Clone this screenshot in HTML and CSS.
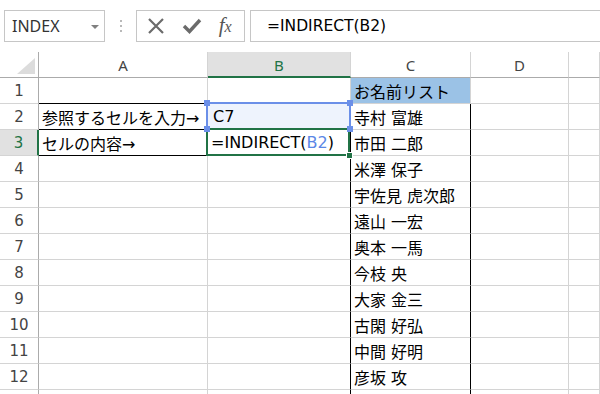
FILE: index.html
```html
<!DOCTYPE html>
<html lang="ja">
<head>
  <meta charset="UTF-8">
  <title>INDIRECT</title>
  <link rel="stylesheet" href="styles.css">
</head>
<body>

  <!-- Formula bar -->
  <div class="toolbar">
    <div class="namebox">
      <span>INDEX</span>
      <span class="caret"></span>
    </div>
    <div class="grip"><i></i><i></i><i></i></div>
    <div class="fbuttons">
      <svg width="18" height="18" viewBox="0 0 18 18"><path d="M2 2 L16 16 M16 2 L2 16" stroke="#6b6b6b" stroke-width="2.2" fill="none"/></svg>
      <svg width="20" height="18" viewBox="0 0 20 18"><path d="M2 9 L7.5 14.5 L18 3" stroke="#6b6b6b" stroke-width="3.4" fill="none"/></svg>
      <span class="fx">f<small>x</small></span>
    </div>
    <div class="formula">=INDIRECT(B2)</div>
  </div>

  <!-- Sheet -->
  <div class="sheet">
    <div class="hd corner"><span class="tri"></span></div>
    <div class="hd">A</div>
    <div class="hd sel">B</div>
    <div class="hd">C</div>
    <div class="hd">D</div>
    <div class="hd"></div>

    <div class="rh">1</div>
    <div class="c bk-b"></div>
    <div class="c"></div>
    <div class="c title">お名前リスト</div>
    <div class="c"></div>
    <div class="c"></div>

    <div class="rh">2</div>
    <div class="c bk-b bk-r">参照するセルを入力→</div>
    <div class="c ref">C7</div>
    <div class="c bk-r">寺村 富雄</div>
    <div class="c"></div>
    <div class="c"></div>

    <div class="rh sel">3</div>
    <div class="c bk-b bk-r">セルの内容→</div>
    <div class="c bk-r">=INDIRECT(<span class="blue">B2</span>)</div>
    <div class="c bk-r">市田 二郎</div>
    <div class="c"></div>
    <div class="c"></div>

    <div class="rh">4</div>
    <div class="c"></div>
    <div class="c bk-r"></div>
    <div class="c bk-r">米澤 保子</div>
    <div class="c"></div>
    <div class="c"></div>

    <div class="rh">5</div>
    <div class="c"></div>
    <div class="c bk-r"></div>
    <div class="c bk-r">宇佐見 虎次郎</div>
    <div class="c"></div>
    <div class="c"></div>

    <div class="rh">6</div>
    <div class="c"></div>
    <div class="c bk-r"></div>
    <div class="c bk-r">遠山 一宏</div>
    <div class="c"></div>
    <div class="c"></div>

    <div class="rh">7</div>
    <div class="c"></div>
    <div class="c bk-r"></div>
    <div class="c bk-r">奥本 一馬</div>
    <div class="c"></div>
    <div class="c"></div>

    <div class="rh">8</div>
    <div class="c"></div>
    <div class="c bk-r"></div>
    <div class="c bk-r">今枝 央</div>
    <div class="c"></div>
    <div class="c"></div>

    <div class="rh">9</div>
    <div class="c"></div>
    <div class="c bk-r"></div>
    <div class="c bk-r">大家 金三</div>
    <div class="c"></div>
    <div class="c"></div>

    <div class="rh">10</div>
    <div class="c"></div>
    <div class="c bk-r"></div>
    <div class="c bk-r">古閑 好弘</div>
    <div class="c"></div>
    <div class="c"></div>

    <div class="rh">11</div>
    <div class="c"></div>
    <div class="c bk-r"></div>
    <div class="c bk-r">中間 好明</div>
    <div class="c"></div>
    <div class="c"></div>

    <div class="rh">12</div>
    <div class="c"></div>
    <div class="c bk-r"></div>
    <div class="c bk-r">彦坂 攻</div>
    <div class="c"></div>
    <div class="c"></div>

    <div class="rh"></div>
    <div class="c"></div>
    <div class="c bk-r"></div>
    <div class="c bk-r"></div>
    <div class="c"></div>
    <div class="c"></div>

    <!-- reference range B2 and active cell B3 -->
    <div class="range">
      <i class="h tl"></i><i class="h tr"></i><i class="h bl"></i><i class="h br"></i>
    </div>
    <div class="active"><i class="fill"></i></div>
    <div class="range-handles">
      <i class="h tl"></i><i class="h tr"></i><i class="h bl"></i><i class="h br"></i>
    </div>
  </div>

</body>
</html>
```

FILE: styles.css
```css
* {
  box-sizing: border-box;
  margin: 0;
  padding: 0;
}

body {
  font-family: "DejaVu Sans", "Noto Sans CJK JP", sans-serif;
  background: #fff;
  color: #000;
  width: 600px;
  height: 394px;
  overflow: hidden;
}

/* ---------- formula bar ---------- */

.toolbar {
  height: 52px;
  display: flex;
  align-items: flex-start;
  padding: 10px 0 0 4px;
}

.namebox {
  width: 101px;
  height: 32px;
  border: 1px solid #c6c6c6;
  display: flex;
  align-items: center;
  justify-content: space-between;
  padding: 0 5px 0 7px;
  font-family: "Noto Sans", sans-serif;
  font-size: 16px;
  color: #333;
}

.caret {
  width: 0;
  height: 0;
  border-left: 4px solid transparent;
  border-right: 4px solid transparent;
  border-top: 4px solid #808080;
  margin-top: 1px;
}

.grip {
  width: 31px;
  height: 32px;
  display: flex;
  flex-direction: column;
  align-items: center;
  justify-content: center;
  gap: 3px;
}

.grip i {
  width: 2px;
  height: 2px;
  background: #b9b9b9;
}

.fbuttons {
  width: 109px;
  height: 32px;
  border: 1px solid #c6c6c6;
  display: flex;
  align-items: center;
  justify-content: space-around;
  padding: 0 4px 0 2px;
}

.fx {
  font-family: "Liberation Serif", serif;
  font-style: italic;
  font-size: 21px;
  color: #555;
  line-height: 1;
  margin-top: -2px;
}

.fx small {
  font-size: 16px;
}

.formula {
  flex: 1;
  height: 32px;
  margin-left: 5px;
  border: 1px solid #c6c6c6;
  border-right: none;
  display: flex;
  align-items: center;
  padding-left: 16px;
  font-size: 15.5px;
}

/* ---------- sheet ---------- */

.sheet {
  position: relative;
  display: grid;
  grid-template-columns: 39px 169px 143px 120px 98px 31px;
  grid-auto-rows: 26px;
}

.hd, .rh, .c {
  border-right: 1px solid #d4d4d4;
  border-bottom: 1px solid #d4d4d4;
  display: flex;
  align-items: center;
  white-space: nowrap;
}

.hd {
  justify-content: center;
  border-bottom-color: #ababab;
  font-family: "Noto Sans", sans-serif;
  font-size: 15px;
  color: #444;
  padding-top: 1px;
}

.corner {
  justify-content: flex-end;
  align-items: flex-end;
  padding: 0 3px 3px 0;
  border-right-color: #ababab;
}

.tri {
  width: 0;
  height: 0;
  border-left: 18px solid transparent;
  border-bottom: 16px solid #dcdcdc;
}

.rh {
  justify-content: center;
  border-right-color: #ababab;
  font-size: 15px;
  color: #444;
}

.hd.sel {
  background: #e1e1e1;
  color: #217346;
  border-bottom: 2px solid #217346;
  padding-top: 2px;
}

.rh.sel {
  background: #e1e1e1;
  color: #217346;
  border-right: 2px solid #217346;
}

.c {
  padding-left: 3px;
  font-size: 16px;
}

.bk-b {
  border-bottom-color: #000;
}

.bk-r {
  border-right-color: #000;
}

.title {
  background: #9bc2e6;
}

.ref {
  background: #eef3fd;
  padding-left: 5px;
}

.blue {
  color: #5b87e6;
}

/* overlays: reference range and active cell */

.range, .range-handles {
  position: absolute;
  left: 206px;
  top: 50px;
  width: 145px;
  height: 28px;
  border: 2px solid #6b8fe8;
}

.range-handles {
  border-color: transparent;
}

.h {
  position: absolute;
  width: 6px;
  height: 6px;
  background: #6b8fe8;
}

.h.tl { left: -4px; top: -4px; }
.h.tr { right: -4px; top: -4px; }
.h.bl { left: -4px; bottom: -4px; }
.h.br { right: -4px; bottom: -4px; }

.active {
  position: absolute;
  left: 206px;
  top: 76px;
  width: 144px;
  height: 28px;
  border: 2px solid #217346;
}

.fill {
  position: absolute;
  right: -5px;
  bottom: -5px;
  width: 7px;
  height: 7px;
  background: #217346;
  border: 1px solid #fff;
}
```
